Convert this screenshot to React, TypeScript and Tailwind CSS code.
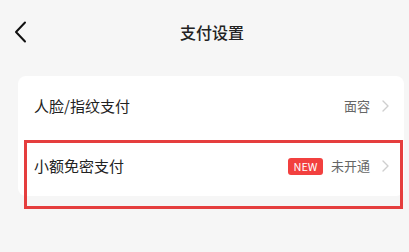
import React from "react";

function ChevronRight() {
  return (
    <svg width="7" height="12" viewBox="0 0 7 12" fill="none" className="shrink-0">
      <path d="M1 1l5 5-5 5" stroke="#cfcfcf" strokeWidth="1.4" strokeLinecap="round" strokeLinejoin="round" />
    </svg>
  );
}

function Row({ label, value, badge }: { label: string; value: string; badge?: boolean }) {
  return (
    <div className="flex h-[60px] items-center pl-4 pr-[15px]">
      <span className="flex-1 text-[15px] text-[#222222]">{label}</span>
      {badge && (
        <span className="mr-2 flex h-[17px] w-[35px] items-center justify-center rounded-[3px] bg-[#f2403f] text-[11px] leading-none text-white">
          NEW
        </span>
      )}
      <span className="mr-[12px] text-[13px] text-[#666666]">{value}</span>
      <ChevronRight />
    </div>
  );
}

export default function App() {
  return (
    <div
      className="relative h-[252px] w-[409px] overflow-hidden bg-[#f6f6f6]"
      style={{ fontFamily: '"Noto Sans CJK SC", "Noto Sans", sans-serif' }}
    >
      <header className="flex h-[64px] items-center">
        <div className="flex w-10 justify-center pl-[1px]">
          <svg width="13" height="22" viewBox="0 0 13 22" fill="none">
            <path d="M11 1.5L2 11l9 9.5" stroke="#111111" strokeWidth="2" strokeLinecap="round" strokeLinejoin="round" />
          </svg>
        </div>
        <h1 className="mr-[25px] flex-1 text-center text-[16px] font-medium text-[#222222]">支付设置</h1>
      </header>

      <div className="ml-[18px] mr-[5px] mt-3 rounded-lg bg-white">
        <Row label="人脸/指纹支付" value="面容" />
        <Row label="小额免密支付" value="未开通" badge />
      </div>

      <div className="pointer-events-none absolute left-[24px] top-[140px] h-[69px] w-[379px] border-[3px] border-[#e53e3e]" />
    </div>
  );
}
